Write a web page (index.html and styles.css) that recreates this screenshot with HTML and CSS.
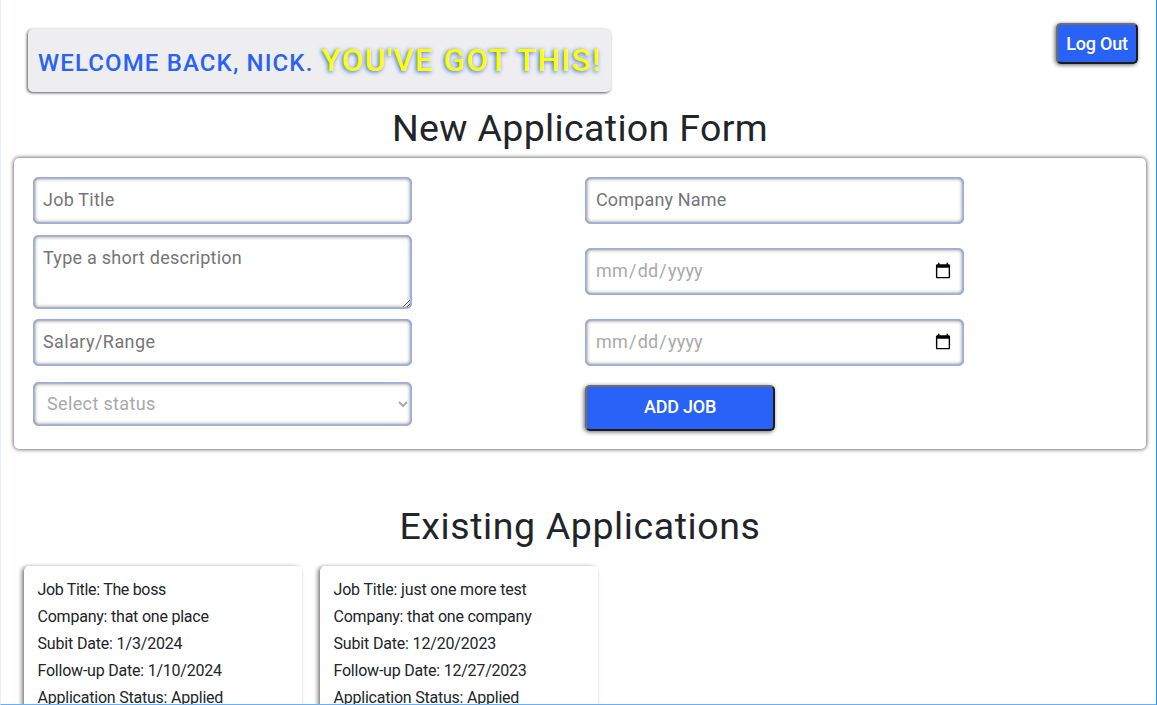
FILE: index.html
```html
<!DOCTYPE html>
<html lang="en">
<head>
<meta charset="utf-8">
<title>Job Applications</title>
<link rel="stylesheet" href="styles.css">
</head>
<body>
<div class="page">
<header class="top">
<h1 class="banner"><span class="welcome">WELCOME BACK, NICK.</span><span class="cheer">YOU'VE GOT THIS!</span></h1>
<button class="btn logout">Log Out</button>
</header>
<h2 class="title title-form">New Application Form</h2>
<form class="form">
<div class="col">
<input class="field job" type="text" placeholder="Job Title">
<textarea class="field desc" placeholder="Type a short description"></textarea>
<input class="field salary" type="text" placeholder="Salary/Range">
<select class="field status"><option>Select status</option></select>
</div>
<div class="col col-right">
<input class="field company" type="text" placeholder="Company Name">
<input class="field date" type="date">
<input class="field date" type="date">
<button class="btn add" type="button">ADD JOB</button>
</div>
</form>
<h2 class="title title-list">Existing Applications</h2>
<section class="cards">
<article class="card">
<p class="tight">Job Title: The boss</p>
<p>Company: that one place</p>
<p class="loose">Subit Date: 1/3/2024</p>
<p>Follow-up Date: 1/10/2024</p>
<p>Application Status: Applied</p>
</article>
<article class="card">
<p class="loose">Job Title: just one more test</p>
<p>Company: that one company</p>
<p class="loose">Subit Date: 12/20/2023</p>
<p>Follow-up Date: 12/27/2023</p>
<p>Application Status: Applied</p>
</article>
</section>
</div>
</body>
</html>
```

FILE: styles.css
```css
* { box-sizing: border-box; }
body { margin: 0; font: 16px/24px Roboto, sans-serif; color: #212529; background: #fff; }
.page { height: 705px; overflow: hidden; padding: 23px 10px 0 13px; border-left: 1px solid #e8f0ff; border-right: 1px solid #0d99ff; border-bottom: 1px solid #62b0ff; }
.top { display: flex; justify-content: space-between; align-items: flex-start; height: 83px; padding: 0 8px 0 14px; }
.banner { display: flex; align-items: baseline; gap: 8px; width: 583px; height: 63px; margin: 6px 0 0; padding: 11px 0 0 10px; border-radius: 5px; background: #eeeef0; box-shadow: -1px 1px 3px #000a; font-weight: 500; line-height: 42px; white-space: nowrap; }
.welcome { font-size: 24px; letter-spacing: 1.13px; color: #2962f6; }
.cheer { font-size: 31.5px; letter-spacing: 1.38px; color: #ff0; text-shadow: -1px 1px 4px #2962f6; }
.btn { border: 2px solid; border-color: #6d6d6d #1c1c1c #1c1c1c #6d6d6d; border-radius: 5px; background: #2962f6; box-shadow: -1px 1px 4px #0009; color: #fff; font: 500 18px/24px Roboto, sans-serif; letter-spacing: -0.22px; padding: 0; }
.logout { width: 82px; height: 41px; }
.title { margin: 0; text-align: center; font-weight: 400; font-size: 37.5px; line-height: 44px; }
.title-form { letter-spacing: 0.35px; }
.title-list { margin-top: 55px; letter-spacing: 0.6px; }
.form { display: grid; grid-template-columns: 552px 1fr; height: 291px; margin-top: 8px; padding: 19px; border-radius: 5px; box-shadow: 0 0 4px #000c; }
.col { display: flex; flex-direction: column; align-items: flex-start; }
.field { width: 379px; height: 47px; margin: 0 0 11px; padding: 0 9px 2px; border: 1px solid #94abf5; border-radius: 5px; background: #fff; box-shadow: inset 0 0 1px #6f86c8, inset 0 0 4px #000a; color: #a9a9a9; font: 18px/24px Roboto, sans-serif; }
.field::placeholder { color: #757575; opacity: 1; }
.job { letter-spacing: 0.23px; }
.desc { height: 74px; margin-bottom: 10px; padding-top: 10px; letter-spacing: 0.26px; }
.salary { margin-bottom: 16px; letter-spacing: 0.43px; }
.status { height: 44px; letter-spacing: 0.36px; }
.company { margin-bottom: 24px; padding-left: 10px; letter-spacing: 0.15px; }
.date { margin-bottom: 24px; padding-bottom: 1px; letter-spacing: 0.2px; }
.date + .date { margin-bottom: 19px; padding-bottom: 2px; }
.add { width: 190px; height: 46px; padding-bottom: 2px; }
.cards { display: flex; gap: 18px; margin: 18px 0 0 9.5px; }
.card { width: 278px; height: 180px; padding: 12px 14px; border-radius: 5px; box-shadow: -2px 1px 4px #0008; }
.card p { margin: 0 0 3px; white-space: nowrap; letter-spacing: -0.22px; }
.card .tight { letter-spacing: -0.32px; }
.card .loose { letter-spacing: -0.17px; }
```
